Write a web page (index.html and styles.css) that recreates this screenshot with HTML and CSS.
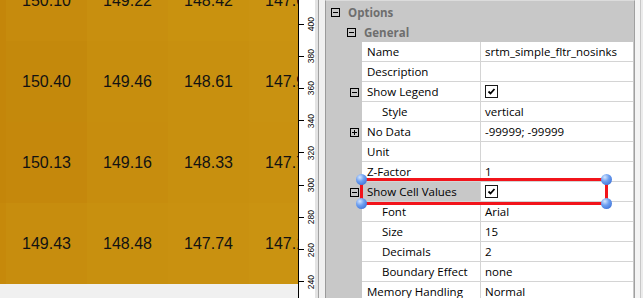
FILE: index.html
```html
<!DOCTYPE html>
<html lang="en">
  <head>
    <meta charset="UTF-8" />
    <title>Grid Properties</title>
    <link rel="stylesheet" href="styles.css">
  </head>
  <body>
    <div class="screen">
      <div class="map">
        <div class="cells">
          <div class="cell c00"></div>
          <div class="cell c01">150.10</div>
          <div class="cell c02">149.22</div>
          <div class="cell c03">148.42</div>
          <div class="cell c04">147.63</div>

          <div class="cell c10"></div>
          <div class="cell c11">150.40</div>
          <div class="cell c12">149.46</div>
          <div class="cell c13">148.61</div>
          <div class="cell c14">147.92</div>

          <div class="cell c20"></div>
          <div class="cell c21">150.13</div>
          <div class="cell c22">149.16</div>
          <div class="cell c23">148.33</div>
          <div class="cell c24">147.71</div>

          <div class="cell c30"></div>
          <div class="cell c31">149.43</div>
          <div class="cell c32">148.48</div>
          <div class="cell c33">147.74</div>
          <div class="cell c34">147.12</div>
        </div>
      </div>

      <div class="ruler">
        <div class="mark"><span class="tick"></span><span class="lbl">400</span></div>
        <div class="mark"><span class="tick"></span><span class="lbl">380</span></div>
        <div class="mark"><span class="tick"></span><span class="lbl">360</span></div>
        <div class="mark"><span class="tick"></span><span class="lbl">340</span></div>
        <div class="mark"><span class="tick"></span><span class="lbl">320</span></div>
        <div class="mark"><span class="tick"></span><span class="lbl">300</span></div>
        <div class="mark"><span class="tick"></span><span class="lbl">280</span></div>
        <div class="mark"><span class="tick"></span><span class="lbl">260</span></div>
        <div class="mark"><span class="tick"></span><span class="lbl">240</span></div>
      </div>

      <div class="splitter"></div>

      <div class="props">
        <div class="cat top"><span class="exp minus"></span>Options</div>
        <div class="cat sub"><span class="exp minus"></span>General</div>

        <div class="row">
          <div class="gut"></div>
          <div class="name">Name</div>
          <div class="val">srtm_simple_fltr_nosinks</div>
        </div>
        <div class="row">
          <div class="gut"></div>
          <div class="name">Description</div>
          <div class="val"></div>
        </div>
        <div class="row">
          <div class="gut"><span class="exp minus"></span></div>
          <div class="name">Show Legend</div>
          <div class="val"><span class="check"><svg width="11" height="11" viewBox="0 0 11 11"><path d="M2.5 5.5 L4.5 7.5 L8.5 3" fill="none" stroke="#000" stroke-width="1.8"/></svg></span></div>
        </div>
        <div class="row">
          <div class="gut"></div>
          <div class="name child">Style</div>
          <div class="val">vertical</div>
        </div>
        <div class="row">
          <div class="gut"><span class="exp plus"></span></div>
          <div class="name">No Data</div>
          <div class="val">-99999; -99999</div>
        </div>
        <div class="row">
          <div class="gut"></div>
          <div class="name">Unit</div>
          <div class="val"></div>
        </div>
        <div class="row">
          <div class="gut"></div>
          <div class="name">Z-Factor</div>
          <div class="val">1</div>
        </div>
        <div class="row selected">
          <div class="gut"><span class="exp minus"></span></div>
          <div class="name">Show Cell Values</div>
          <div class="val"><span class="check"><svg width="11" height="11" viewBox="0 0 11 11"><path d="M2.5 5.5 L4.5 7.5 L8.5 3" fill="none" stroke="#000" stroke-width="1.8"/></svg></span></div>
        </div>
        <div class="row">
          <div class="gut"></div>
          <div class="name child">Font</div>
          <div class="val">Arial</div>
        </div>
        <div class="row">
          <div class="gut"></div>
          <div class="name child">Size</div>
          <div class="val">15</div>
        </div>
        <div class="row">
          <div class="gut"></div>
          <div class="name child">Decimals</div>
          <div class="val">2</div>
        </div>
        <div class="row">
          <div class="gut"></div>
          <div class="name child">Boundary Effect</div>
          <div class="val">none</div>
        </div>
        <div class="row">
          <div class="gut"></div>
          <div class="name">Memory Handling</div>
          <div class="val">Normal</div>
        </div>
      </div>

      <div class="edge"></div>

      <!-- red highlight drawn over the property grid -->
      <div class="highlight">
        <span class="dot tl"></span>
        <span class="dot tr"></span>
        <span class="dot bl"></span>
        <span class="dot br"></span>
      </div>
    </div>
  </body>
</html>
```

FILE: styles.css
```css
body {
  margin: 0;
  padding: 0;
  background-color: #f0f0f0;
  overflow: hidden;
}
.screen {
  position: relative;
  display: flex;
  width: 643px;
  height: 298px;
  overflow: hidden;
}

/* map with cell values */
.map {
  width: 298px;
  height: 298px;
  overflow: hidden;
  flex-shrink: 0;
}
.cells {
  display: grid;
  grid-template-columns: repeat(5, 81px);
  grid-auto-rows: 81px;
  margin-left: -75px;
  margin-top: -40px;
  width: 405px;
}
.cell {
  display: flex;
  align-items: center;
  justify-content: center;
  font-family: "Liberation Sans", Arial, sans-serif;
  font-size: 16px;
  color: #121212;
  white-space: nowrap;
  overflow: hidden;
}
.c00, .c10, .c20 { background-color: #c4860a; }
.c30 { background-color: #c6890b; }
.c01 { background-color: #c68b0d; }
.c02 { background-color: #c88f0f; }
.c03 { background-color: #c9920f; }
.c04 { background-color: #ca9311; }
.c11 { background-color: #c4890c; }
.c12 { background-color: #c78e0e; }
.c13 { background-color: #c8900f; }
.c14 { background-color: #c99211; }
.c21 { background-color: #c5880c; }
.c22 { background-color: #c78d0e; }
.c23 { background-color: #c8900f; }
.c24 { background-color: #c99110; }
.c31 { background-color: #c78d0e; }
.c32 { background-color: #c8900f; }
.c33 { background-color: #c99110; }
.c34 { background-color: #ca9311; }

/* vertical axis */
.ruler {
  width: 16px;
  flex-shrink: 0;
  background-color: #fff;
  border-left: 1px solid #000;
  padding-top: 8px;
  display: flex;
  flex-direction: column;
}
.mark {
  height: 32.4px;
  display: flex;
  align-items: center;
}
.tick {
  width: 5px;
  height: 1px;
  background-color: #000;
}
.lbl {
  margin-left: 3px;
  writing-mode: vertical-rl;
  transform: rotate(180deg);
  font-family: "Liberation Sans", Arial, sans-serif;
  font-size: 8.5px;
  line-height: 8px;
  color: #000;
}

.splitter {
  width: 10px;
  flex-shrink: 0;
  background: linear-gradient(to right, #e3e3e3 0 3px, #a0a0a0 3px 4px, #f0f0f0 4px);
}

/* property grid */
.props {
  width: 308px;
  flex-shrink: 0;
  background-color: #c8c8c8;
  border-left: 1px solid #9a9a9a;
  border-right: 1px solid #a0a0a0;
  border-top: 1px solid #dcdcdc;
  padding-top: 1px;
  font-family: "Open Sans", sans-serif;
  font-size: 11.5px;
  color: #000;
}
.cat {
  height: 20px;
  display: flex;
  align-items: center;
  font-weight: bold;
  color: #6e6e6e;
}
.cat.top { padding-left: 5px; }
.cat.sub { padding-left: 21px; }
.cat .exp { margin-right: 8px; }

.row {
  display: grid;
  grid-template-columns: 36px 119px 152px;
  height: 20px;
}
.gut {
  display: flex;
  align-items: center;
  padding-left: 24px;
}
.name,
.val {
  background-color: #fff;
  border-bottom: 1px solid #d4d4d4;
  display: flex;
  align-items: center;
  white-space: nowrap;
  overflow: hidden;
}
.name {
  border-right: 1px solid #d4d4d4;
  padding-left: 5px;
}
.name.child { padding-left: 20px; }
.val { padding-left: 4px; }
.selected .name { background-color: #c8c8c8; }

.exp {
  position: relative;
  width: 9px;
  height: 9px;
  border: 1px solid #000;
  box-sizing: border-box;
  flex-shrink: 0;
}
.exp::before {
  content: "";
  position: absolute;
  left: 1px;
  top: 3px;
  width: 5px;
  height: 1px;
  background-color: #000;
}
.exp.plus::after {
  content: "";
  position: absolute;
  left: 3px;
  top: 1px;
  width: 1px;
  height: 5px;
  background-color: #000;
}

.check {
  width: 13px;
  height: 13px;
  border: 1px solid #1a1a1a;
  background-color: #fff;
  box-sizing: border-box;
  display: flex;
  align-items: center;
  justify-content: center;
}

.edge {
  flex: 1;
  background: linear-gradient(to right, #f4f4f4 0 5px, #c8c8c8 5px 6px, #ececec 6px);
}

.highlight {
  position: absolute;
  left: 360px;
  top: 178px;
  width: 248px;
  height: 27px;
  border: 3px solid #f2141b;
  box-sizing: border-box;
}
.dot {
  position: absolute;
  width: 11px;
  height: 11px;
  border-radius: 50%;
  background: radial-gradient(circle at 35% 30%, #d4e6ff 0, #6d9ff0 40%, #2d62cf 100%);
}
.dot.tl { left: -7px; top: -7px; }
.dot.tr { right: -7px; top: -7px; }
.dot.bl { left: -7px; bottom: -7px; }
.dot.br { right: -7px; bottom: -7px; }
```
